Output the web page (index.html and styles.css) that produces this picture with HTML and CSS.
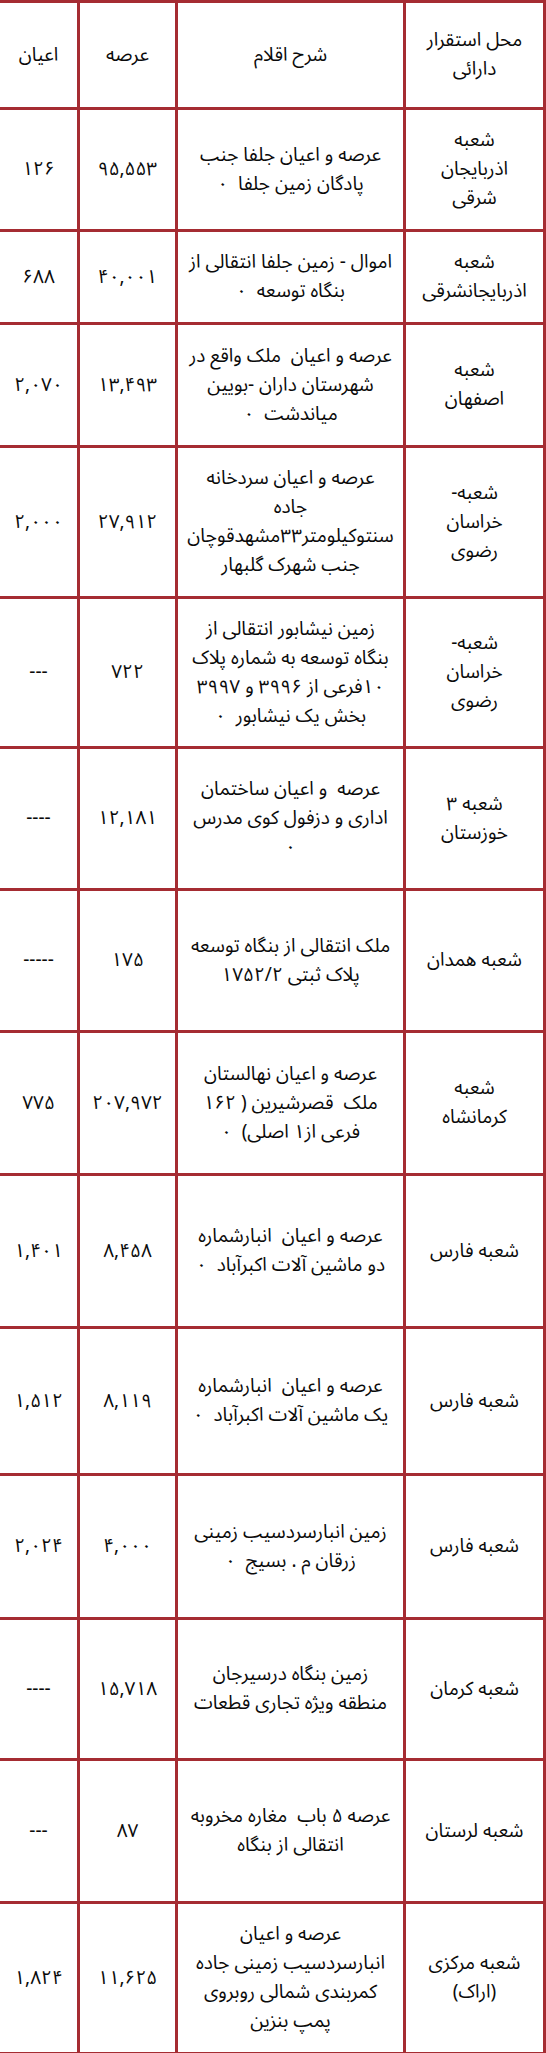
FILE: index.html
```html
<!DOCTYPE html>
<html lang="fa" dir="rtl">
<head>
<meta charset="utf-8">
<title>دارائی ها</title>
<link rel="stylesheet" href="styles.css">
</head>
<body>
<table class="assets">
  <colgroup>
    <col class="c-loc">
    <col class="c-desc">
    <col class="c-arse">
    <col class="c-ayan">
  </colgroup>
  <tbody>
    <tr>
      <td>محل استقرار<br>دارائی</td>
      <td>شرح اقلام</td>
      <td>عرصه</td>
      <td>اعیان</td>
    </tr>
    <tr>
      <td>شعبه<br>اذربایجان<br>شرقی</td>
      <td>عرصه و اعیان جلفا جنب<br>پادگان زمین جلفا&nbsp; ۰</td>
      <td>۹۵,۵۵۳</td>
      <td>۱۲۶</td>
    </tr>
    <tr>
      <td>شعبه<br>اذربایجانشرقی</td>
      <td>اموال - زمین جلفا انتقالی از<br>بنگاه توسعه&nbsp; ۰</td>
      <td>۴۰,۰۰۱</td>
      <td>۶۸۸</td>
    </tr>
    <tr>
      <td>شعبه<br>اصفهان</td>
      <td>عرصه و اعیان&nbsp; ملک واقع در<br>شهرستان داران -بویین<br>میاندشت&nbsp; ۰</td>
      <td>۱۳,۴۹۳</td>
      <td>۲,۰۷۰</td>
    </tr>
    <tr>
      <td>شعبه-<br>خراسان<br>رضوی</td>
      <td>عرصه و اعیان سردخانه<br>جاده<br>سنتوکیلومتر۳۳مشهدقوچان<br>جنب شهرک گلبهار</td>
      <td>۲۷,۹۱۲</td>
      <td>۲,۰۰۰</td>
    </tr>
    <tr>
      <td>شعبه-<br>خراسان<br>رضوی</td>
      <td>زمین نیشابور انتقالی از<br>بنگاه توسعه به شماره پلاک<br>۱۰فرعی از ۳۹۹۶ و ۳۹۹۷<br>بخش یک نیشابور&nbsp; ۰</td>
      <td>۷۲۲</td>
      <td>---</td>
    </tr>
    <tr>
      <td>شعبه ۳<br>خوزستان</td>
      <td>عرصه&nbsp; و اعیان ساختمان<br>اداری و دزفول کوی مدرس<br>۰</td>
      <td>۱۲,۱۸۱</td>
      <td>----</td>
    </tr>
    <tr>
      <td>شعبه همدان</td>
      <td>ملک انتقالی از بنگاه توسعه<br>پلاک ثبتی ۱۷۵۲/۲</td>
      <td>۱۷۵</td>
      <td>-----</td>
    </tr>
    <tr>
      <td>شعبه<br>کرمانشاه</td>
      <td>عرصه و اعیان نهالستان<br>ملک&nbsp; قصرشیرین ( ۱۶۲<br>فرعی از۱ اصلی)&nbsp; ۰</td>
      <td>۲۰۷,۹۷۲</td>
      <td>۷۷۵</td>
    </tr>
    <tr>
      <td>شعبه فارس</td>
      <td>عرصه و اعیان&nbsp; انبارشماره<br>دو ماشین آلات اکبرآباد&nbsp; ۰</td>
      <td>۸,۴۵۸</td>
      <td>۱,۴۰۱</td>
    </tr>
    <tr>
      <td>شعبه فارس</td>
      <td>عرصه و اعیان&nbsp; انبارشماره<br>یک ماشین آلات اکبرآباد&nbsp; ۰</td>
      <td>۸,۱۱۹</td>
      <td>۱,۵۱۲</td>
    </tr>
    <tr>
      <td>شعبه فارس</td>
      <td>زمین انبارسردسیب زمینی<br>زرقان م . بسیج&nbsp; ۰</td>
      <td>۴,۰۰۰</td>
      <td>۲,۰۲۴</td>
    </tr>
    <tr>
      <td>شعبه کرمان</td>
      <td>زمین بنگاه درسیرجان<br>منطقه ویژه تجاری قطعات</td>
      <td>۱۵,۷۱۸</td>
      <td>----</td>
    </tr>
    <tr>
      <td>شعبه لرستان</td>
      <td>عرصه ۵ باب&nbsp; مغاره مخروبه<br>انتقالی از بنگاه</td>
      <td>۸۷</td>
      <td>---</td>
    </tr>
    <tr>
      <td>شعبه مرکزی<br>(اراک)</td>
      <td>عرصه و اعیان<br>انبارسردسیب زمینی جاده<br>کمربندی شمالی روبروی<br>پمپ بنزین</td>
      <td>۱۱,۶۲۵</td>
      <td>۱,۸۲۴</td>
    </tr>
  </tbody>
</table>
</body>
</html>
```

FILE: styles.css
```css
html, body {
  margin: 0;
  padding: 0;
  background: #ffffff;
}

body {
  font-family: "Noto Sans Arabic", "DejaVu Sans", sans-serif;
  font-size: 19px;
  color: #0a0a0a;
}

.assets {
  width: 546px;
  table-layout: fixed;
  border-collapse: collapse;
  direction: rtl;
}

.assets td {
  border: 3px solid #a52c32;
  text-align: center;
  vertical-align: middle;
  line-height: 29px;
  padding: 0 3px;
}

.c-loc { width: 140px; }
.c-desc { width: 228px; }
.c-arse { width: 98px; }
.c-ayan { width: 80px; }

.assets tr:nth-child(1) { height: 107px; }
.assets tr:nth-child(2) { height: 122px; }
.assets tr:nth-child(3) { height: 93px; }
.assets tr:nth-child(4) { height: 123px; }
.assets tr:nth-child(5) { height: 151px; }
.assets tr:nth-child(6) { height: 150px; }
.assets tr:nth-child(7) { height: 142px; }
.assets tr:nth-child(8) { height: 142px; }
.assets tr:nth-child(9) { height: 143px; }
.assets tr:nth-child(10) { height: 153px; }
.assets tr:nth-child(11) { height: 147px; }
.assets tr:nth-child(12) { height: 144px; }
.assets tr:nth-child(13) { height: 141px; }
.assets tr:nth-child(14) { height: 143px; }
.assets tr:nth-child(15) { height: 151px; }
```
